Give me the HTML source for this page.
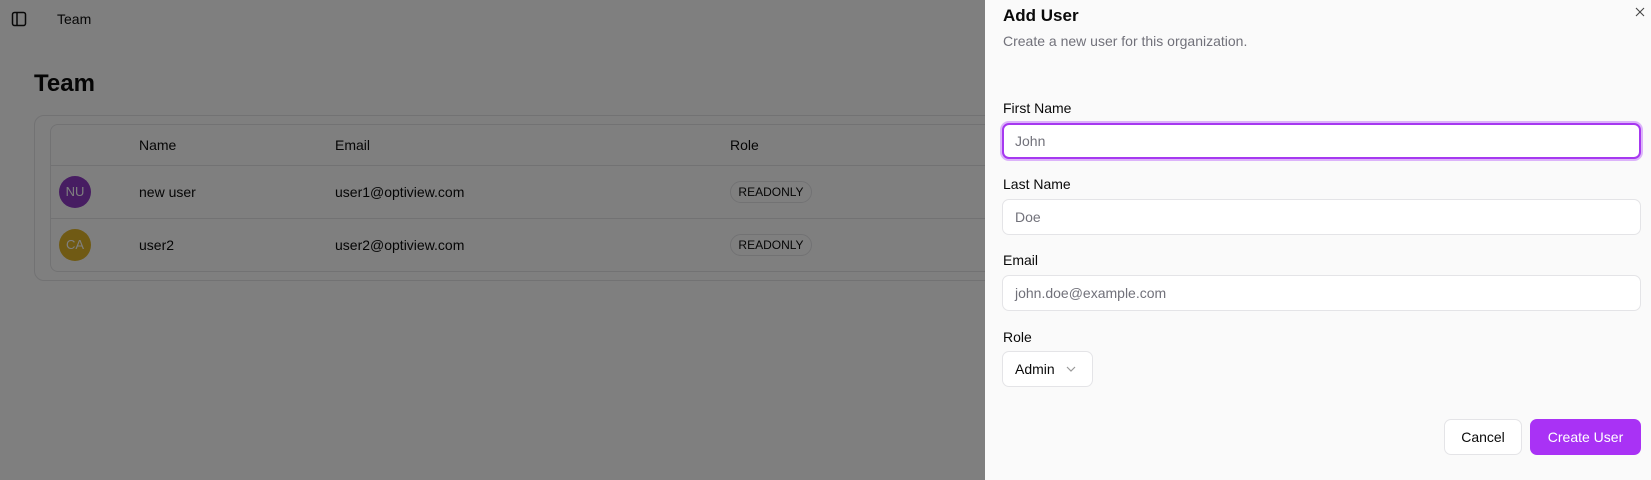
<!DOCTYPE html>
<html><head><meta charset="utf-8"><style>
*{box-sizing:border-box;margin:0;padding:0}
body{width:1651px;height:480px;overflow:hidden;font-family:"Liberation Sans",sans-serif;background:#fff;position:relative;color:#0a0a0a}
.abs{position:absolute}
.overlay{position:absolute;left:0;top:0;width:1651px;height:480px;background:rgba(0,0,0,0.5)}
.panel{position:absolute;left:985px;top:0;width:666px;height:480px;background:#fafafa}
.lbl{position:absolute;left:18px;font-size:14px;font-weight:500;color:#0a0a0a}
.inp{position:absolute;left:17px;width:639px;height:36px;border:1px solid #e4e4e7;border-radius:7px;background:#fff;font-size:14px;color:#71717a;padding-left:12px;line-height:34px}
.th{position:absolute;top:137px;font-size:14px;font-weight:500}
.td{position:absolute;font-size:14px}
.av{position:absolute;left:59px;width:32px;height:32px;border-radius:50%;color:#fff;font-size:13px;text-align:center;line-height:32px}
.badge{position:absolute;left:730px;width:82px;height:22px;border:1px solid #e4e4e7;border-radius:11px;font-size:12px;text-align:center;line-height:20px}
</style></head><body>
<svg class="abs" style="left:11px;top:11px" width="16" height="16" viewBox="0 0 16 16" fill="none" stroke="#111" stroke-width="1.5"><rect x="1.5" y="1.5" width="13" height="13" rx="2"/><line x1="6" y1="1.5" x2="6" y2="14.5"/></svg>
<div class="abs" style="left:57px;top:11px;font-size:14px">Team</div>
<div class="abs" style="left:34px;top:70px;font-size:24px;font-weight:700">Team</div>
<div class="abs" style="left:34px;top:115px;width:1000px;height:166px;border:1px solid #e4e4e7;border-radius:10px"></div>
<div class="abs" style="left:50px;top:124px;width:990px;height:148px;border:1px solid #e4e4e7;border-radius:8px"></div>
<div class="abs" style="left:50px;top:165px;width:990px;height:1px;background:#e4e4e7"></div>
<div class="abs" style="left:50px;top:218px;width:990px;height:1px;background:#e4e4e7"></div>
<div class="th" style="left:139px">Name</div>
<div class="th" style="left:335px">Email</div>
<div class="th" style="left:730px">Role</div>
<div class="av" style="top:176px;background:#8e3bc4">NU</div>
<div class="av" style="top:229px;background:#e0b528">CA</div>
<div class="td" style="left:139px;top:184px">new user</div>
<div class="td" style="left:335px;top:184px">user1@optiview.com</div>
<div class="td" style="left:139px;top:237px">user2</div>
<div class="td" style="left:335px;top:237px">user2@optiview.com</div>
<div class="badge" style="top:181px">READONLY</div>
<div class="badge" style="top:234px">READONLY</div>
<div class="overlay"></div>
<div class="panel">
<div class="abs" style="left:18px;top:6px;font-size:17px;font-weight:600">Add User</div>
<div class="abs" style="left:18px;top:33px;font-size:14px;color:#71717a">Create a new user for this organization.</div>
<svg class="abs" style="left:647px;top:4px" width="16" height="16" viewBox="0 0 16 16" stroke="#444" stroke-width="1.1"><line x1="4" y1="4" x2="12" y2="12"/><line x1="12" y1="4" x2="4" y2="12"/></svg>
<div class="lbl" style="top:100px">First Name</div>
<div class="inp" style="top:123px;border:2px solid #a638f0;box-shadow:0 0 0 2px #dcb3fa;padding-left:11px;line-height:32px">John</div>
<div class="lbl" style="top:176px">Last Name</div>
<div class="inp" style="top:199px">Doe</div>
<div class="lbl" style="top:252px">Email</div>
<div class="inp" style="top:275px">john.doe@example.com</div>
<div class="lbl" style="top:329px">Role</div>
<div class="inp" style="top:351px;width:91px;color:#0a0a0a">Admin<svg class="abs" style="left:63px;top:13px" width="10" height="8" viewBox="0 0 10 8" fill="none" stroke="#999" stroke-width="1.2"><polyline points="1,2 5,6 9,2"/></svg></div>
<div class="abs" style="left:459px;top:419px;width:78px;height:36px;border:1px solid #e4e4e7;border-radius:7px;background:#fff;font-size:14px;text-align:center;line-height:34px;font-weight:500">Cancel</div>
<div class="abs" style="left:545px;top:419px;width:111px;height:36px;border-radius:7px;background:#a932f5;color:#fff;font-size:14px;text-align:center;line-height:36px;font-weight:500">Create User</div>
</div>
</body></html>
